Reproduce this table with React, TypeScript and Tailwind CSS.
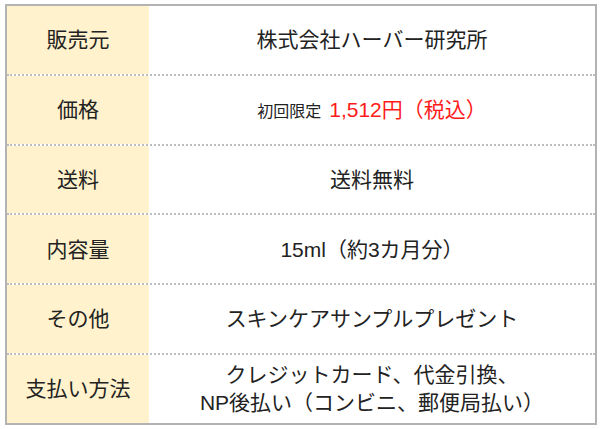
const rows: { label: string; value: React.ReactNode }[] = [
  { label: '販売元', value: '株式会社ハーバー研究所' },
  {
    label: '価格',
    value: (
      <span className="flex items-baseline">
        <span className="text-[16px]">初回限定</span>
        <span className="ml-[8px] text-[#ff1a1a]">1,512円（税込）</span>
      </span>
    ),
  },
  { label: '送料', value: '送料無料' },
  { label: '内容量', value: '15ml（約3カ月分）' },
  { label: 'その他', value: 'スキンケアサンプルプレゼント' },
  {
    label: '支払い方法',
    value: (
      <span className="block leading-[28px]">
        クレジットカード、代金引換、
        <br />
        NP後払い（コンビニ、郵便局払い）
      </span>
    ),
  },
];

export default function App() {
  return (
    <div
      className="w-[600px] h-[429px] bg-white pt-[4px] pl-[5px] text-[#222]"
      style={{ fontFamily: '"Liberation Sans", "Noto Sans CJK JP", sans-serif' }}
    >
      <div className="w-[592px] h-[421px] border-2 border-[#b3b3b3] flex flex-col">
        {rows.map((row, i) => (
          <div
            key={row.label}
            className={
              i === 0
                ? 'flex flex-1'
                : 'flex flex-1 border-t-2 border-dotted border-[#bdbdbd]'
            }
          >
            <div className="w-[142px] bg-[#fff2cc] flex items-center justify-center text-[21px]">
              {row.label}
            </div>
            <div className="flex-1 flex items-center justify-center text-center text-[21px]">
              {row.value}
            </div>
          </div>
        ))}
      </div>
    </div>
  );
}
